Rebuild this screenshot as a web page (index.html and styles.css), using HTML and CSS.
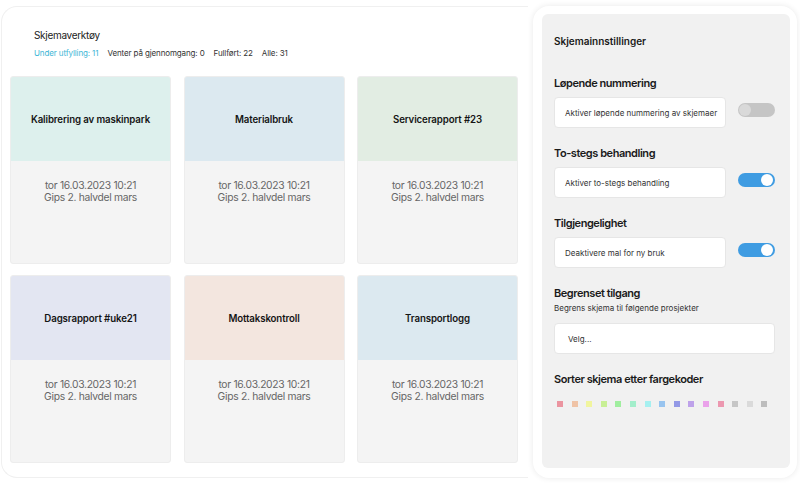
FILE: index.html
```html
<!DOCTYPE html>
<html lang="no">
<head>
<meta charset="utf-8">
<title>Skjemaverktøy</title>
<link rel="stylesheet" href="styles.css">
</head>
<body>
<div class="app">
  <section class="main">
    <h1 class="page-title">Skjemaverktøy</h1>
    <nav class="status">
      <span class="status-item active">Under utfylling: 11</span>
      <span class="status-item">Venter på gjennomgang: 0</span>
      <span class="status-item">Fullført: 22</span>
      <span class="status-item">Alle: 31</span>
    </nav>
    <div class="grid">
      <div class="card">
        <div class="card-head mint">Kalibrering av maskinpark</div>
        <div class="card-body"><div>tor 16.03.2023 10:21</div><div>Gips 2. halvdel mars</div></div>
      </div>
      <div class="card">
        <div class="card-head sky">Materialbruk</div>
        <div class="card-body"><div>tor 16.03.2023 10:21</div><div>Gips 2. halvdel mars</div></div>
      </div>
      <div class="card">
        <div class="card-head sage">Servicerapport #23</div>
        <div class="card-body"><div>tor 16.03.2023 10:21</div><div>Gips 2. halvdel mars</div></div>
      </div>
      <div class="card">
        <div class="card-head lavender">Dagsrapport #uke21</div>
        <div class="card-body"><div>tor 16.03.2023 10:21</div><div>Gips 2. halvdel mars</div></div>
      </div>
      <div class="card">
        <div class="card-head peach">Mottakskontroll</div>
        <div class="card-body"><div>tor 16.03.2023 10:21</div><div>Gips 2. halvdel mars</div></div>
      </div>
      <div class="card">
        <div class="card-head sky">Transportlogg</div>
        <div class="card-body"><div>tor 16.03.2023 10:21</div><div>Gips 2. halvdel mars</div></div>
      </div>
    </div>
  </section>

  <aside class="side">
    <div class="panel">
      <h2 class="panel-title">Skjemainnstillinger</h2>

      <div class="setting">
        <h3 class="setting-title">Løpende nummering</h3>
        <div class="setting-row">
          <div class="field">Aktiver løpende nummering av skjemaer</div>
          <span class="toggle"></span>
        </div>
      </div>

      <div class="setting">
        <h3 class="setting-title">To-stegs behandling</h3>
        <div class="setting-row">
          <div class="field">Aktiver to-stegs behandling</div>
          <span class="toggle on"></span>
        </div>
      </div>

      <div class="setting">
        <h3 class="setting-title">Tilgjengelighet</h3>
        <div class="setting-row">
          <div class="field">Deaktivere mal for ny bruk</div>
          <span class="toggle on"></span>
        </div>
      </div>

      <div class="setting">
        <h3 class="setting-title">Begrenset tilgang</h3>
        <p class="setting-sub">Begrens skjema til følgende prosjekter</p>
        <div class="field select">Velg...</div>
      </div>

      <div class="setting">
        <h3 class="setting-title">Sorter skjema etter fargekoder</h3>
        <div class="swatches">
          <span class="sw" style="background:#eb95a0"></span>
          <span class="sw" style="background:#efc3a6"></span>
          <span class="sw" style="background:#f1f59e"></span>
          <span class="sw" style="background:#c8ef95"></span>
          <span class="sw" style="background:#a0ee9f"></span>
          <span class="sw" style="background:#a3eecb"></span>
          <span class="sw" style="background:#a6f0f0"></span>
          <span class="sw" style="background:#98c4ef"></span>
          <span class="sw" style="background:#9399e6"></span>
          <span class="sw" style="background:#bea2ea"></span>
          <span class="sw" style="background:#eaa2ea"></span>
          <span class="sw" style="background:#ec98b0"></span>
          <span class="sw" style="background:#c6c6c6"></span>
          <span class="sw" style="background:#dadada"></span>
          <span class="sw" style="background:#bdbdbd"></span>
        </div>
      </div>
    </div>
  </aside>
</div>
</body>
</html>
```

FILE: styles.css
```css
* { box-sizing: border-box; }

html, body {
  margin: 0;
  padding: 0;
  background: #ffffff;
}

body {
  width: 800px;
  height: 486px;
  font-family: Inter, "Noto Sans", "Liberation Sans", sans-serif;
  color: #1c1c1c;
  overflow: hidden;
}

.app {
  display: flex;
  align-items: stretch;
  padding: 6px 3px 8px 1px;
  height: 486px;
  gap: 5px;
}

/* ---------- left area ---------- */
.main {
  width: 527px;
  border: 1px solid #f0f0f0;
  border-right: none;
  border-radius: 16px 0 0 16px;
  padding: 21px 9px 0 8px;
}

.page-title {
  margin: 0 0 0 24px;
  font-size: 10px;
  letter-spacing: -0.3px;
  line-height: 15px;
  font-weight: 400;
  color: #222;
}

.status {
  display: flex;
  gap: 9px;
  margin: 5px 0 0 24px;
  font-size: 8px;
  letter-spacing: -0.12px;
  line-height: 11px;
  color: #333;
}

.status-item.active { color: #3eb6d6; }

.grid {
  margin-top: 17px;
  display: grid;
  grid-template-columns: repeat(3, 161px);
  grid-auto-rows: 188px;
  column-gap: 12.5px;
  row-gap: 11px;
}

.card {
  display: flex;
  flex-direction: column;
  border: 1px solid #ededed;
  border-radius: 3px;
  overflow: hidden;
  background: #f4f4f4;
}

.card-head {
  height: 84px;
  flex: none;
  display: flex;
  align-items: center;
  justify-content: center;
  font-size: 9.7px;
  letter-spacing: -0.12px;
  font-weight: 600;
  color: #151515;
}

.mint { background: #ddf0ed; }
.sky { background: #dce9f0; }
.sage { background: #e2ede3; }
.lavender { background: #e3e6f2; }
.peach { background: #f3e6df; }

.card-body {
  flex: 1;
  padding-top: 18px;
  text-align: center;
  font-size: 10.3px;
  letter-spacing: -0.3px;
  line-height: 12px;
  color: #666;
}

/* ---------- right panel ---------- */
.side {
  width: 264px;
  background: #fff;
  border-radius: 16px;
  box-shadow: 0 0 6px rgba(0, 0, 0, 0.09);
  padding: 8px 7px 10px 9px;
}

.panel {
  height: 100%;
  background: #f1f1f1;
  border-radius: 6px;
  padding: 20px 15px 0 12px;
}

.panel-title {
  margin: 0;
  font-size: 10px;
  line-height: 14px;
  font-weight: 600;
  color: #1a1a1a;
}

.setting { margin-top: 18px; }
.panel-title + .setting { margin-top: 28px; }

.setting-title {
  margin: 0;
  font-size: 11px;
  letter-spacing: -0.45px;
  line-height: 14px;
  font-weight: 600;
  color: #1a1a1a;
}

.setting-row {
  margin-top: 7px;
  display: flex;
  align-items: center;
  justify-content: space-between;
}

.field {
  width: 172px;
  height: 31px;
  background: #fff;
  border: 1px solid #e6e6e6;
  border-radius: 4px;
  padding-left: 10px;
  display: flex;
  align-items: center;
  font-size: 8px;
  color: #333;
}

.field.select {
  width: 100%;
  margin-top: 9px;
  padding-left: 13px;
}

.setting-sub {
  margin: 3px 0 0;
  font-size: 8px;
  line-height: 11px;
  color: #333;
}

.toggle {
  position: relative;
  width: 37px;
  height: 14px;
  border-radius: 7px;
  background: #c5c5c5;
  margin-top: -5px;
}

.toggle::after {
  content: "";
  position: absolute;
  top: 1px;
  left: 1px;
  width: 12px;
  height: 12px;
  border-radius: 50%;
  background: #d9d9d9;
}

.toggle.on { background: #3f9ce2; }
.toggle.on::after {
  left: auto;
  right: 2px;
  background: #fff;
}

.swatches {
  margin-top: 15px;
  padding-left: 3px;
  display: flex;
  gap: 8.6px;
}

.sw {
  width: 6px;
  height: 6px;
}
```
